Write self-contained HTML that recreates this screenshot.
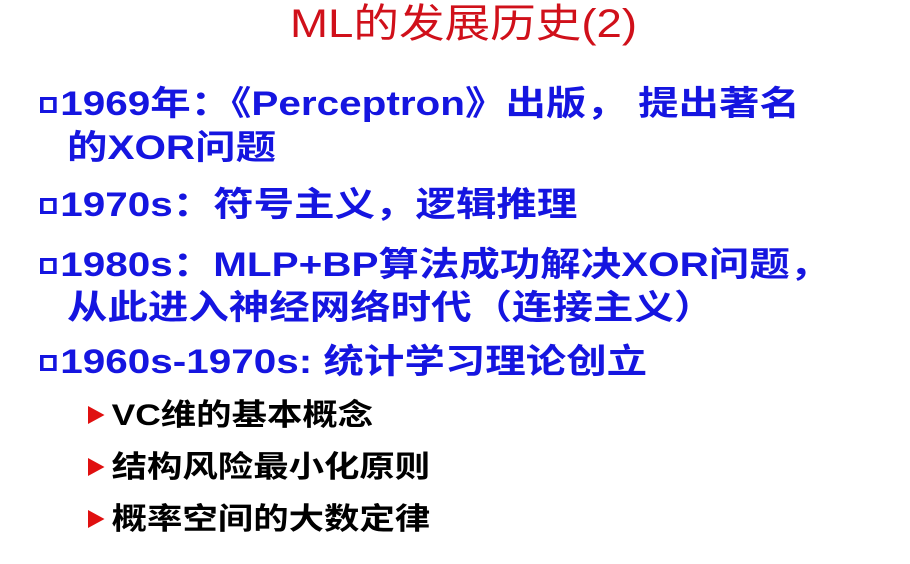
<!DOCTYPE html>
<html><head><meta charset="utf-8"><style>
body{margin:0;width:910px;height:564px;background:#fff;overflow:hidden;position:relative;font-family:"Liberation Sans","Noto Sans CJK SC",sans-serif;}
div{position:absolute;white-space:nowrap;transform-origin:0 50%;}
.t{left:290px;top:1px;font-size:40px;color:#d0101a;line-height:46px;transform:scaleX(1.14);}
.b{color:#1515e0;font-weight:bold;font-size:34px;line-height:40px;transform:scaleX(1.19);}
.sq{display:inline-block;width:14px;height:16px;border:3px solid #1515e0;box-sizing:border-box;margin-right:3px;vertical-align:2px;}
.s{color:#000;font-size:30px;line-height:36px;font-weight:bold;transform:scaleX(1.18);}
.ar{display:inline-block;width:0;height:0;border-left:14px solid #e01010;border-top:9px solid transparent;border-bottom:9px solid transparent;margin-right:6px;vertical-align:1px;}
</style></head><body>
<div class="t">ML的发展历史(2)</div>
<div class="b" style="left:40px;top:84px"><span class="sq"></span>1969年：《Perceptron》出版，&nbsp;提出著名</div>
<div class="b" style="left:67px;top:128px">的XOR问题</div>
<div class="b" style="left:40px;top:185px"><span class="sq"></span>1970s：符号主义，逻辑推理</div>
<div class="b" style="left:40px;top:245px"><span class="sq"></span>1980s：MLP+BP算法成功解决XOR问题，</div>
<div class="b" style="left:67px;top:288px">从此进入神经网络时代（连接主义）</div>
<div class="b" style="left:40px;top:342px"><span class="sq"></span>1960s-1970s: 统计学习理论创立</div>
<div class="s" style="left:88px;top:398px"><span class="ar"></span>VC维的基本概念</div>
<div class="s" style="left:88px;top:450px"><span class="ar"></span>结构风险最小化原则</div>
<div class="s" style="left:88px;top:502px"><span class="ar"></span>概率空间的大数定律</div>
</body></html>
